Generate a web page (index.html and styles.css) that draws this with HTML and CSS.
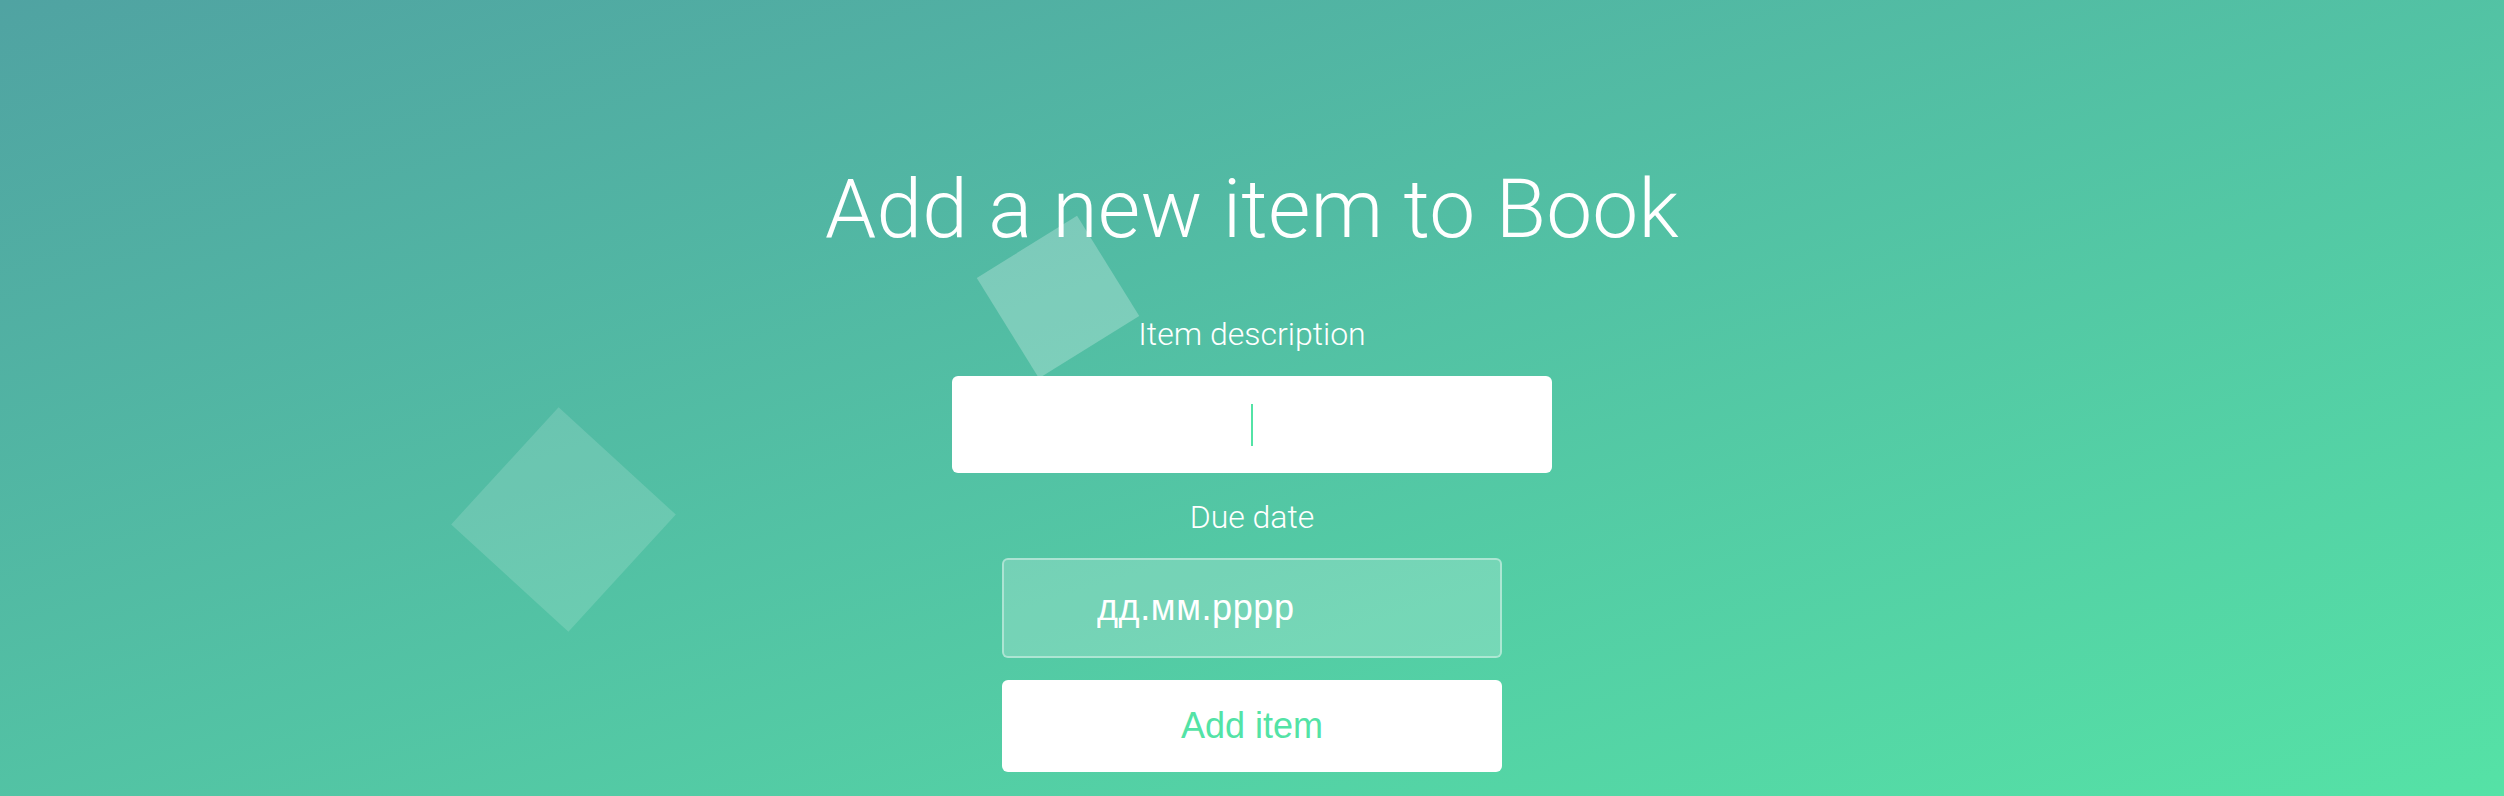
FILE: index.html
```html
<!DOCTYPE html>
<html lang="en">
<head>
<meta charset="utf-8">
<title>Add a new item to Book</title>
<link rel="stylesheet" href="styles.css">
</head>
<body>
<div class="wrapper">
  <ul class="bg-bubbles">
    <li class="bubble bubble-a"></li>
    <li class="bubble bubble-b"></li>
  </ul>
  <main class="container">
    <h1 class="title">Add a new item to Book</h1>
    <form class="form">
      <label class="label" for="desc">Item description</label>
      <div class="field-wrap">
        <input class="field field-focus" id="desc" type="text">
        <span class="caret"></span>
      </div>
      <label class="label label-due" for="due">Due date</label>
      <input class="field field-date" id="due" type="text" placeholder="дд.мм.рррр">
      <button class="btn" type="button">Add item</button>
    </form>
  </main>
</div>
</body>
</html>
```
FILE: styles.css
```css
* { box-sizing: border-box; }
html, body { margin: 0; padding: 0; }
body {
  height: 796px;
  overflow: hidden;
  background: linear-gradient(to bottom right, #50a3a2 0%, #55e2a6 100%);
  font-family: "Helvetica Neue", Roboto, "Liberation Sans", sans-serif;
  font-weight: 300;
  color: #fff;
}
.wrapper { position: relative; height: 796px; }
.bg-bubbles {
  position: absolute;
  inset: 0;
  margin: 0;
  padding: 0;
  list-style: none;
  z-index: 0;
}
.bubble { position: absolute; display: block; }
.bubble-a {
  left: 999px; top: 238px; width: 118px; height: 118px;
  background: rgba(255,255,255,0.25);
  transform: rotate(-31.8deg);
}
.bubble-b {
  left: 484px; top: 440px; width: 159px; height: 159px;
  background: rgba(255,255,255,0.15);
  transform: rotate(42.5deg);
}
.container {
  position: relative;
  z-index: 1;
  padding-top: 168px;
  display: flex;
  flex-direction: column;
  align-items: center;
}
.title {
  margin: 0;
  font-size: 82px;
  line-height: 82px;
  font-weight: 300;
  letter-spacing: 0.2px;
}
.form {
  margin-top: 68px;
  display: flex;
  flex-direction: column;
  align-items: center;
}
.label {
  font-size: 32px;
  line-height: 32px;
  margin-bottom: 26px;
}
.label-due { margin-top: 28px; margin-bottom: 25px; }
.field-wrap { position: relative; }
.field {
  display: block;
  border-radius: 6px;
  outline: 0;
  font-family: "Liberation Sans", Arial, sans-serif;
  font-size: 36px;
  color: #fff;
}
.field-focus {
  width: 600px;
  height: 97px;
  border: 0;
  background: #fff;
  text-align: center;
  color: #53e3a6;
}
.caret {
  position: absolute;
  left: 299px;
  top: 28px;
  width: 2px;
  height: 42px;
  background: #53e3a6;
}
.field-date {
  width: 500px;
  height: 100px;
  border: 2px solid rgba(255,255,255,0.4);
  background: rgba(255,255,255,0.2);
  padding: 0 0 0 93px;
  letter-spacing: 0.6px;
}
.field-date::placeholder { color: #fff; opacity: 1; }
.btn {
  margin-top: 22px;
  width: 500px;
  height: 92px;
  border: 0;
  border-radius: 6px;
  background: #fff;
  color: #53e3a6;
  font-family: "Liberation Sans", Arial, sans-serif;
  font-size: 36px;
  padding: 0;
  cursor: pointer;
}
```
